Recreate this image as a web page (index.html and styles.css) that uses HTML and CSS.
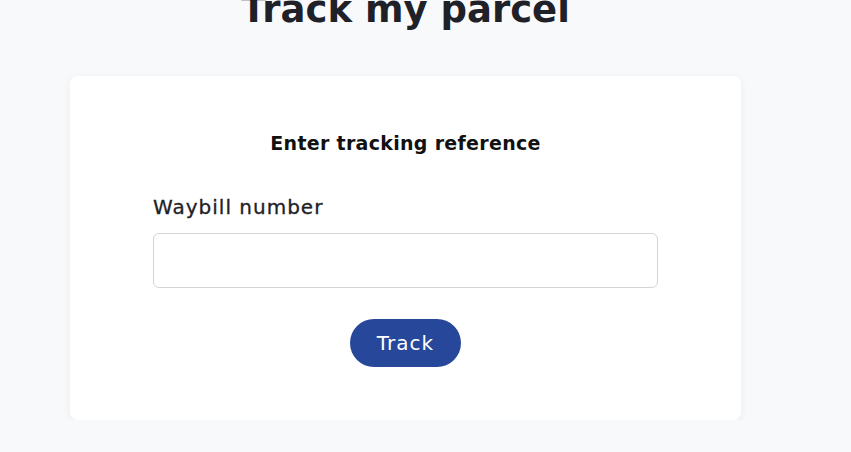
FILE: index.html
```html
<!DOCTYPE html>
<html>
<head>
  <meta charset="UTF-8">
  <title>Track my parcel</title>
  <meta name="viewport" content="width=device-width, initial-scale=1.0">
  <link rel="stylesheet" href="styles.css">
</head>
<body>
<div class="page">
  <h1 class="page-title">Track my parcel</h1>

  <!-- Tracking form -->
  <div class="track-card">
    <h2>Enter tracking reference</h2>
    <label for="waybill">Waybill number</label>
    <input type="text" id="waybill">
    <div class="actions">
      <button class="btn">Track</button>
    </div>
  </div>
</div>
</body>
</html>
```

FILE: styles.css
```css
body {
  font-family: "DejaVu Sans", sans-serif;
  background-color: #f8f9fb;
  color: #1f2128;
  margin: 0;
  padding: 0;
}

.page {
  width: 671px;
  margin-left: 70px;
}

.page-title {
  margin: -20px 0 0;
  height: 96px;
  line-height: 60px;
  font-size: 37px;
  font-weight: bold;
  text-align: center;
}

/*Tracking form*/
.track-card {
  background: white;
  border-radius: 8px;
  box-shadow: 0 2px 8px rgba(0, 0, 0, 0.06);
  padding: 55px 83px 53px;
  display: flex;
  flex-direction: column;
}

.track-card h2 {
  margin: 0 0 40px;
  font-size: 19px;
  line-height: 24px;
  letter-spacing: 0.3px;
  font-weight: bold;
  color: #111;
  text-align: center;
}

.track-card label {
  font-size: 20px;
  line-height: 24px;
  letter-spacing: 1px;
  margin-bottom: 14px;
  -webkit-text-stroke: 0.3px #1f2128;
}

.track-card input {
  height: 55px;
  box-sizing: border-box;
  border: 1px solid #d4d4d8;
  border-radius: 6px;
  font-size: 18px;
  padding: 0 14px;
  margin: 0 0 31px;
}

.actions {
  display: flex;
  justify-content: center;
}

.btn {
  width: 111px;
  height: 48px;
  background: #26479a;
  color: white;
  font-family: inherit;
  font-size: 20px;
  letter-spacing: 1px;
  border: none;
  border-radius: 24px;
  cursor: pointer;
}
```
